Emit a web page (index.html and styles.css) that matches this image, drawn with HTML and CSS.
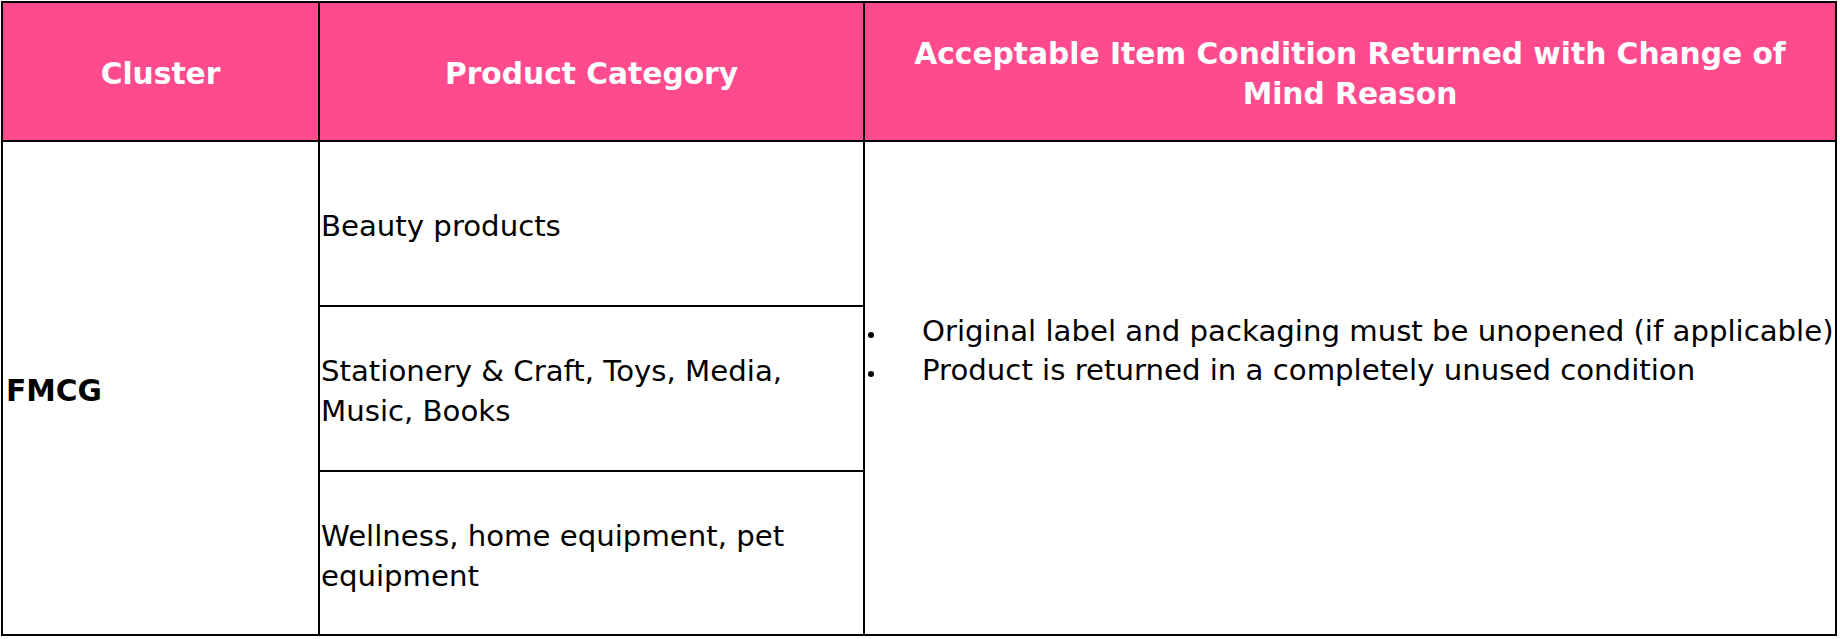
FILE: index.html
```html
<!DOCTYPE html>
<html lang="en">
<head>
<meta charset="utf-8">
<title>Return conditions</title>
<link rel="stylesheet" href="styles.css">
</head>
<body>
<div class="sheet">
  <div class="head">Cluster</div>
  <div class="head">Product Category</div>
  <div class="head">Acceptable Item Condition Returned with Change of Mind Reason</div>
  <div class="cluster">FMCG</div>
  <div class="cat r1">Beauty products</div>
  <div class="cond">
    <ul class="conds">
      <li>Original label and packaging must be unopened (if applicable)</li>
      <li>Product is returned in a completely unused condition</li>
    </ul>
  </div>
  <div class="cat r2">Stationery &amp; Craft, Toys, Media, Music, Books</div>
  <div class="cat r3">Wellness, home equipment, pet equipment</div>
</div>
</body>
</html>
```

FILE: styles.css
```css
html, body {
  margin: 0;
  padding: 0;
  background: #fff;
}
body {
  padding: 1px 0 0 1px;
  font-family: "DejaVu Sans", sans-serif;
  font-size: 29.2px;
  line-height: 40px;
  color: #000;
}
.sheet {
  display: grid;
  grid-template-columns: 315px 543px 970px;
  grid-template-rows: 137px 163px 163px 162px;
  gap: 2px;
  padding: 2px;
  background: #000;
  width: 1832px;
}
.head {
  background: #ff4a8e;
  color: #fff;
  font-weight: bold;
  font-size: 29.7px;
  display: flex;
  align-items: center;
  justify-content: center;
  text-align: center;
  padding: 5px 30px 0;
}
.cluster {
  grid-column: 1;
  grid-row: 2 / 5;
  background: #fff;
  font-weight: bold;
  font-size: 29.7px;
  display: flex;
  align-items: center;
  padding: 5px 0 0 3px;
}
.cat {
  grid-column: 2;
  background: #fff;
  display: flex;
  align-items: center;
  padding: 5px 0 0 1px;
}
.r1 { grid-row: 2; }
.r2 { grid-row: 3; }
.r3 { grid-row: 4; }
.cond {
  grid-column: 3;
  grid-row: 2 / 5;
  background: #fff;
  display: flex;
  align-items: center;
  padding: 5px 0 79px;
}
.conds {
  list-style: none;
  margin: 0;
  padding: 0;
  line-height: 39px;
}
.conds li {
  display: flex;
  align-items: center;
  white-space: nowrap;
}
.conds li::before {
  content: "";
  flex: none;
  width: 6px;
  height: 6px;
  border-radius: 50%;
  background: #000;
  margin: 6px 48px 0 3px;
}
```
